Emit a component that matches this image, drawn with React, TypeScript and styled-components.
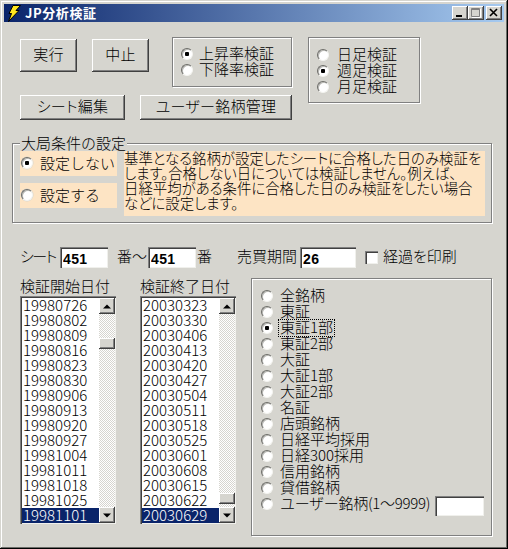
import React from 'react';
import styled, { createGlobalStyle } from 'styled-components';

const face = '#d6d5cf';
const gothic = '"Noto Sans CJK JP", "Liberation Sans", sans-serif';

const GlobalStyle = createGlobalStyle`
  html, body {
    margin: 0;
    padding: 0;
    background: ${face};
  }
`;

const Window = styled.div`
  box-sizing: border-box;
  width: 508px;
  height: 549px;
  padding: 4px;
  display: flex;
  flex-direction: column;
  overflow: hidden;
  background: ${face};
  color: #000;
  font-family: ${gothic};
  font-size: 15px;
  font-weight: 300;
  line-height: 16px;
  font-feature-settings: "palt";
  box-shadow: inset -1px -1px #000, inset 1px 1px ${face}, inset -2px -2px #6c6c68, inset 2px 2px #fff;
`;

const TitleBar = styled.div`
  flex: none;
  height: 18px;
  display: flex;
  align-items: center;
  padding: 0 2px 0 3px;
  background: linear-gradient(90deg, #0a246a, #a6caf0);
`;

const TitleText = styled.span`
  margin-left: 4px;
  color: #fff;
  font-size: 13px;
  font-weight: 700;
  letter-spacing: 0.6px;
  font-feature-settings: normal;
`;

const TitleButtons = styled.div`
  margin-left: auto;
  display: flex;
`;

const TitleButton = styled.div<{ $gap?: boolean }>`
  width: 16px;
  height: 14px;
  margin-left: ${({ $gap }) => ($gap ? '2px' : '0')};
  display: flex;
  align-items: center;
  justify-content: center;
  background: ${face};
  box-shadow: inset -1px -1px #404040, inset 1px 1px #fff, inset -2px -2px #808080;
`;

const Client = styled.div`
  flex: 1;
  min-width: 0;
  padding: 15px 12px 0 16px;
`;

const TopGrid = styled.div`
  display: grid;
  grid-template-columns: 152px 120px 16px 112px;
  grid-template-rows: 50px 25px;
  row-gap: 8px;
`;

const Button = styled.button<{ $w: number; $h: number }>`
  box-sizing: border-box;
  width: ${({ $w }) => $w}px;
  height: ${({ $h }) => $h}px;
  padding: 0 0 3px;
  border: 0;
  background: ${face};
  color: #000;
  font: inherit;
  font-feature-settings: inherit;
  letter-spacing: 0.3px;
  box-shadow: inset -1px -1px #404040, inset 1px 1px #fff, inset -2px -2px #808080;
`;

const ButtonRow = styled.div<{ $wide?: boolean; $top?: number }>`
  display: flex;
  gap: 15px;
  padding-top: ${({ $top }) => $top ?? 0}px;
  grid-column: ${({ $wide }) => ($wide ? '1 / span 2' : '1')};
  grid-row: ${({ $wide }) => ($wide ? '2' : '1')};
`;

const Group = styled.div<{ $top: number; $col: number; $h: number; $rows: string }>`
  box-sizing: border-box;
  height: ${({ $h }) => $h}px;
  grid-column: ${({ $col }) => $col};
  grid-row: ${({ $rows }) => $rows};
  padding: ${({ $top }) => $top}px 0 0 8px;
  border: 1px solid #808080;
  box-shadow: 1px 1px 0 #fff, inset 1px 1px 0 #fff;
  display: flex;
  flex-direction: column;
`;

const RadioRow = styled.label<{ $gap: number }>`
  height: 16px;
  display: flex;
  align-items: flex-start;
  gap: ${({ $gap }) => $gap}px;
  line-height: 14px;
  white-space: nowrap;
  font-feature-settings: normal;
`;

const Radio = styled.input.attrs({ type: 'radio' })`
  appearance: none;
  flex: none;
  box-sizing: border-box;
  width: 12px;
  height: 12px;
  margin: 2px 0 0;
  border-radius: 50%;
  border: 1px solid;
  border-color: #6c6c68 #f4f4f0 #f4f4f0 #6c6c68;
  background: #fff;
  box-shadow: 0 0 0 0.5px ${face}, inset 1px 1px #b8b8b4;

  &:checked {
    background: radial-gradient(circle, #000 0 2px, #fff 2.5px);
  }
`;

const ChoiceRadio = styled(Radio)`
  margin: 0;
`;

const Settings = styled.fieldset`
  box-sizing: border-box;
  width: 480px;
  min-width: 0;
  height: 88px;
  margin: 15px 0 0 -8px;
  padding: 0 6px 0 7px;
  border: 1px solid #808080;
  box-shadow: 1px 1px 0 #fff, inset 1px 1px 0 #fff;
  display: flex;
  gap: 7px;
`;

const SettingsLegend = styled.legend`
  margin-left: 0;
  padding: 0 1px;
  line-height: 15px;
  height: 16px;
  background: ${face};
  font-feature-settings: normal;
`;

const ChoiceColumn = styled.div`
  flex: none;
  width: 97px;
  display: flex;
  flex-direction: column;
  gap: 7px;
`;

const Choice = styled.label`
  box-sizing: border-box;
  height: 25px;
  padding: 0 0 1px 1px;
  display: flex;
  align-items: center;
  gap: 7px;
  background: #fde4c4;
  font-feature-settings: normal;
`;

const Note = styled.div`
  flex: 1;
  min-width: 0;
  height: 65px;
  background: #fde4c4;
  font-size: 14.4px;
`;

const NoteLine = styled.div`
  height: 15px;
  line-height: 13px;
  white-space: nowrap;
`;

const FormRow = styled.div`
  height: 21px;
  margin-top: 24px;
  display: flex;
  align-items: center;
`;

const FieldLabel = styled.span<{ $w: number; $indent?: number; $squeeze?: number }>`
  flex: none;
  box-sizing: border-box;
  width: ${({ $w }) => $w}px;
  padding: 0 0 3px ${({ $indent }) => $indent ?? 0}px;
  letter-spacing: ${({ $squeeze }) => $squeeze ?? 0}px;
  white-space: nowrap;
`;

const Field = styled.input<{ $w: number }>`
  flex: none;
  box-sizing: border-box;
  width: ${({ $w }) => $w}px;
  height: 21px;
  margin: 0;
  padding: 3px 0 0 3px;
  border: 0;
  outline: 0;
  background: #fff;
  color: #000;
  font-family: "Liberation Sans", sans-serif;
  font-size: 14px;
  font-weight: 700;
  letter-spacing: 0.4px;
  box-shadow: inset 1px 1px #808080, inset 2px 2px #404040, inset -1px -1px #f0f0ec;
`;

const Check = styled.input.attrs({ type: 'checkbox' })`
  appearance: none;
  flex: none;
  box-sizing: border-box;
  width: 13px;
  height: 13px;
  margin: 0 5px 0 9px;
  background: #fff;
  box-shadow: inset 1px 1px #808080, inset 2px 2px #404040, inset -1px -1px #f0f0ec;
`;

const Lower = styled.div`
  display: flex;
  margin-top: 10px;
`;

const ListColumn = styled.div<{ $gap: number }>`
  flex: none;
  width: 96px;
  margin-right: ${({ $gap }) => $gap}px;
`;

const ListLabel = styled.div`
  height: 18px;
  white-space: nowrap;
  font-feature-settings: normal;
`;

const ListBox = styled.div`
  box-sizing: border-box;
  height: 228px;
  padding: 2px 1px 1px 2px;
  display: flex;
  background: #fff;
  box-shadow: inset 1px 1px #808080, inset 2px 2px #404040, inset -1px -1px #f0f0ec;
`;

const Items = styled.div`
  flex: 1;
  min-width: 0;
`;

const Item = styled.div<{ $selected?: boolean }>`
  height: 15px;
  padding-left: 1px;
  line-height: 13px;
  font-feature-settings: normal;
  color: ${({ $selected }) => ($selected ? '#fff' : '#000')};
  background: ${({ $selected }) => ($selected ? '#0a246a' : 'transparent')};
`;

const ScrollBar = styled.div`
  flex: none;
  width: 16px;
  display: flex;
  flex-direction: column;
  background: repeating-conic-gradient(${face} 0 25%, #fff 0 50%) 0 0 / 2px 2px;
`;

const ScrollButton = styled.div`
  flex: none;
  height: 16px;
  display: flex;
  align-items: center;
  justify-content: center;
  background: ${face};
  box-shadow: inset -1px -1px #404040, inset 1px 1px #fff, inset -2px -2px #808080;
`;

const ScrollTrack = styled.div<{ $offset: number }>`
  flex: 1;
  padding-top: ${({ $offset }) => $offset}px;
`;

const Thumb = styled.div`
  height: 11px;
  background: ${face};
  box-shadow: inset -1px -1px #404040, inset 1px 1px #fff, inset -2px -2px #808080;
`;

const MarketGroup = styled.div`
  box-sizing: border-box;
  flex: none;
  width: 241px;
  height: 258px;
  padding: 9px 0 0 9px;
  border: 1px solid #808080;
  box-shadow: 1px 1px 0 #fff, inset 1px 1px 0 #fff;
`;

const MarketLabel = styled.span<{ $focus?: boolean; $tight?: boolean }>`
  padding: 0 1px;
  height: 16px;
  white-space: nowrap;
  letter-spacing: ${({ $tight }) => ($tight ? '-0.3px' : '0')};
  outline: ${({ $focus }) => ($focus ? '1px dotted #000' : 'none')};
`;

const CodeField = styled.input`
  box-sizing: border-box;
  width: 49px;
  height: 20px;
  margin-left: -2px;
  padding: 0;
  border: 0;
  outline: 0;
  background: #fff;
  box-shadow: inset 1px 1px #808080, inset 2px 2px #404040, inset -1px -1px #f0f0ec;
`;

const startDates = [
  '19980726', '19980802', '19980809', '19980816', '19980823', '19980830', '19980906', '19980913',
  '19980920', '19980927', '19981004', '19981011', '19981018', '19981025', '19981101',
];

const endDates = [
  '20030323', '20030330', '20030406', '20030413', '20030420', '20030427', '20030504', '20030511',
  '20030518', '20030525', '20030601', '20030608', '20030615', '20030622', '20030629',
];

const markets = [
  '全銘柄', '東証', '東証1部', '東証2部', '大証', '大証1部', '大証2部', '名証',
  '店頭銘柄', '日経平均採用', '日経300採用', '信用銘柄', '貸借銘柄',
];

const Arrow = ({ up }: { up?: boolean }) => (
  <svg width="8" height="5" viewBox="0 0 8 5">
    <path d={up ? 'M4 0.5 L8 4.5 L0 4.5 Z' : 'M0 0.5 L8 0.5 L4 4.5 Z'} fill="#000" />
  </svg>
);

const DateList = ({ dates, offset }: { dates: string[]; offset: number }) => (
  <ListBox>
    <Items>
      {dates.map((d, i) => (
        <Item key={d} $selected={i === dates.length - 1}>{d}</Item>
      ))}
    </Items>
    <ScrollBar>
      <ScrollButton><Arrow up /></ScrollButton>
      <ScrollTrack $offset={offset}><Thumb /></ScrollTrack>
      <ScrollButton><Arrow /></ScrollButton>
    </ScrollBar>
  </ListBox>
);

function App() {
  return (
    <Window>
      <GlobalStyle />
      <TitleBar>
        <svg width="14" height="17" viewBox="0 0 14 17">
          <path d="M6 0.5 L13.5 0.5 L9 5.5 L12 5.5 L1.5 16.5 L4.5 8.5 L2 8.5 Z" fill="#ffe61e" stroke="#000" strokeWidth="1" />
        </svg>
        <TitleText>JP分析検証</TitleText>
        <TitleButtons>
          <TitleButton>
            <svg width="10" height="10" viewBox="0 0 10 10"><rect x="1" y="7" width="6" height="2" fill="#000" /></svg>
          </TitleButton>
          <TitleButton>
            <svg width="10" height="10" viewBox="0 0 10 10">
              <path d="M0.5 0.5 H8.5 V8.5 H0.5 Z M0.5 1.5 H8.5" fill="none" stroke="#808080" />
              <path d="M9.5 1 V9.5 H1" fill="none" stroke="#fff" />
            </svg>
          </TitleButton>
          <TitleButton $gap>
            <svg width="10" height="10" viewBox="0 0 10 10">
              <path d="M1 1 L8 8 M8 1 L1 8" fill="none" stroke="#000" strokeWidth="1.6" />
            </svg>
          </TitleButton>
        </TitleButtons>
      </TitleBar>

      <Client>
        <TopGrid>
          <ButtonRow $top={2}>
            <Button $w={57} $h={33}>実行</Button>
            <Button $w={57} $h={33}>中止</Button>
          </ButtonRow>
          <Group $top={8} $col={2} $h={50} $rows="1">
            <RadioRow $gap={6}><Radio name="rate" defaultChecked />上昇率検証</RadioRow>
            <RadioRow $gap={6}><Radio name="rate" />下降率検証</RadioRow>
          </Group>
          <Group $top={9} $col={4} $h={66} $rows="1 / span 2">
            <RadioRow $gap={8}><Radio name="span" />日足検証</RadioRow>
            <RadioRow $gap={8}><Radio name="span" defaultChecked />週足検証</RadioRow>
            <RadioRow $gap={8}><Radio name="span" />月足検証</RadioRow>
          </Group>
          <ButtonRow $wide>
            <Button $w={105} $h={25}>シート編集</Button>
            <Button $w={152} $h={25}>ユーザー銘柄管理</Button>
          </ButtonRow>
        </TopGrid>

        <Settings>
          <SettingsLegend>大局条件の設定</SettingsLegend>
          <ChoiceColumn>
            <Choice><ChoiceRadio name="market-cond" defaultChecked />設定しない</Choice>
            <Choice><ChoiceRadio name="market-cond" />設定する</Choice>
          </ChoiceColumn>
          <Note>
            <NoteLine>基準となる銘柄が設定したシートに合格した日のみ検証を</NoteLine>
            <NoteLine>します。合格しない日については検証しません。例えば、</NoteLine>
            <NoteLine>日経平均がある条件に合格した日のみ検証をしたい場合</NoteLine>
            <NoteLine>などに設定します。</NoteLine>
          </Note>
        </Settings>

        <FormRow>
          <FieldLabel $w={40} $squeeze={-1.5}>シート</FieldLabel>
          <Field $w={48} defaultValue="451" />
          <FieldLabel $w={40} $indent={9}>番～</FieldLabel>
          <Field $w={48} defaultValue="451" />
          <FieldLabel $w={41} $indent={1}>番</FieldLabel>
          <FieldLabel $w={63}>売買期間</FieldLabel>
          <Field $w={56} defaultValue="26" />
          <Check />
          <FieldLabel $w={80}>経過を印刷</FieldLabel>
        </FormRow>

        <Lower>
          <ListColumn $gap={24}>
            <ListLabel>検証開始日付</ListLabel>
            <DateList dates={startDates} offset={24} />
          </ListColumn>
          <ListColumn $gap={15}>
            <ListLabel>検証終了日付</ListLabel>
            <DateList dates={endDates} offset={179} />
          </ListColumn>
          <MarketGroup>
            {markets.map((m) => (
              <RadioRow $gap={6} key={m}>
                <Radio name="market" defaultChecked={m === '東証1部'} />
                <MarketLabel $focus={m === '東証1部'}>{m}</MarketLabel>
              </RadioRow>
            ))}
            <RadioRow $gap={6}>
              <Radio name="market" />
              <MarketLabel $tight>ユーザー銘柄(1～9999)</MarketLabel>
              <CodeField />
            </RadioRow>
          </MarketGroup>
        </Lower>
      </Client>
    </Window>
  );
}

export default App;
